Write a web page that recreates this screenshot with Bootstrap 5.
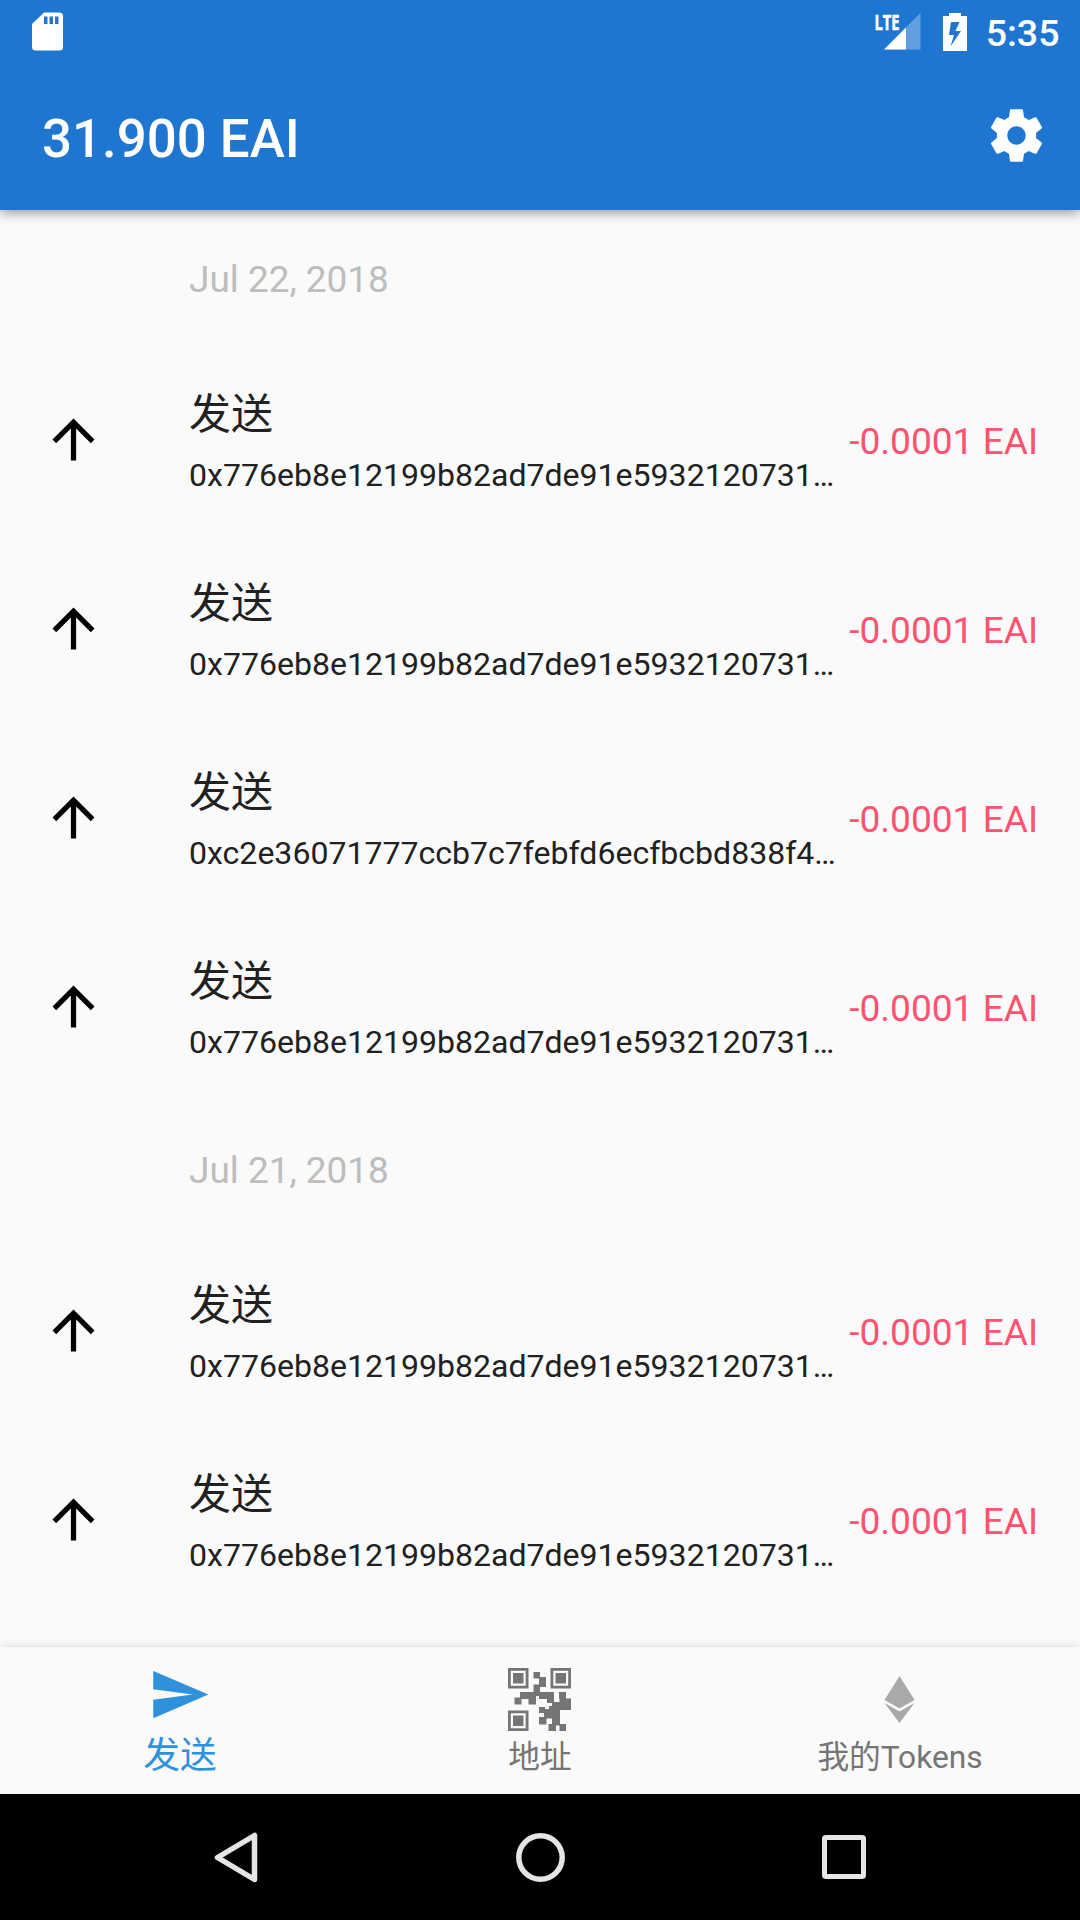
<!DOCTYPE html>
<html lang="zh-CN">
<head>
<meta charset="utf-8">
<meta name="viewport" content="width=device-width, initial-scale=1">
<title>EAI Wallet</title>
<link href="https://cdn.jsdelivr.net/npm/bootstrap@5.3.0/dist/css/bootstrap.min.css" rel="stylesheet">
<style>
body{font-family:Roboto,"Noto Sans CJK SC",sans-serif;background:#fafafa;color:#212121;width:1080px;height:1920px;overflow:hidden}
.top-area{background:#1f76d0;height:210px;box-shadow:0 2px 12px rgba(0,0,0,.45);z-index:2}
.status-bar{height:63px;padding:0 20.5px 0 32px}
.clock{font-size:37.5px;font-weight:500;line-height:63px;margin-left:18.5px;padding-top:3px}
.battery{margin-left:22px}
.lte{font:700 22px "Open Sans",Roboto,sans-serif;stroke:#fff;stroke-width:.6px}
.app-bar{height:147px;padding:0 32px 0 42px}
.app-title{font-size:52.8px;font-weight:500;line-height:62px;padding-top:5px}
.gear{margin-bottom:2px}
svg{display:block;flex:none}
.date-head{height:137px;padding:1px 0 0 189px;font-size:36.95px;line-height:137px;color:#bdbdbd}
.date-head.later{height:135px;line-height:133px}
.tx{height:189px;padding:0 42px}
.tx-arrow{width:147px;padding-bottom:5px}
.tx-title{font-size:42px;line-height:60px}
.tx-hash{font-size:32.06px;line-height:48px;padding-top:6px}
.tx-text{margin-right:-20px}
.tx-amount{font-size:37.1px;color:#ff5270}
.bottom-nav{height:147px;background:#fafafa;box-shadow:0 0 8px rgba(0,0,0,.15);color:#757575;z-index:2}
.tab-item{padding-top:16px}
.tab-item svg{margin-right:2px}
.tab-label{font-size:31.7px;line-height:44px;padding-top:10px}
.active-tab{color:#2d91dc}
.active-tab .tab-label{font-size:36.75px;padding-top:8px}
.tab-item svg.qr{margin:5px 1.500px -5px 0}
.tab-item svg.eth{margin-top:5px;margin-bottom:-5px}
.sys-nav{height:126px;background:#000;padding:0 205px}
</style>
</head>
<body class="d-flex flex-column">
<svg width="0" height="0" class="position-absolute"><symbol id="up" viewBox="0 0 24 24"><path d="M4 12l1.410 1.410L11 7.830V20h2V7.830l5.580 5.590L20 12l-8-8-8 8z"/></symbol></svg>
<header class="top-area position-relative flex-shrink-0 text-white">
  <div class="status-bar d-flex align-items-center justify-content-between">
    <svg width="31" height="39" viewBox="0 0 31 39" fill="#fff"><path fill-rule="evenodd" d="M12 .5h15.500a3.500 3.500 0 0 1 3.500 3.500v31a3.500 3.500 0 0 1-3.500 3.500h-24a3.500 3.500 0 0 1-3.500-3.500V12zM12 4.500v7.500h3.500V4.500zM17.500 4.500v7.500H21V4.500zM23 4.500v7.500h3.500V4.500z"/></svg>
    <div class="d-flex align-items-center">
      <svg width="46" height="37" viewBox="0 0 46 37" fill="#fff" overflow="visible"><path d="M45.500 0V36.500H9z" opacity=".3"/><path d="M31 14.500v22H9z"/><text class="lte" x="-.5" y="16.500" textLength="25" lengthAdjust="spacingAndGlyphs">LTE</text></svg>
      <svg class="battery" width="24" height="38" viewBox="0 0 24 38" fill="#fff"><path fill-rule="evenodd" d="M0 3h6V0h12v3h6v35H0zM8 9L6 22h5L7.500 33.500 18 18h-5.500L16.500 9z"/></svg>
      <span class="clock">5:35</span>
    </div>
  </div>
  <div class="app-bar d-flex align-items-center justify-content-between">
    <div class="app-title">31.900 EAI</div>
    <svg class="gear" width="63" height="63" viewBox="0 0 24 24" fill="#fff"><path d="M19.430 12.980c.04-.32.07-.64.07-.98s-.03-.66-.07-.98l2.110-1.650c.19-.15.24-.42.12-.64l-2-3.460c-.12-.22-.39-.3-.61-.22l-2.490 1c-.52-.4-1.080-.73-1.690-.98l-.38-2.650C14.460 2.180 14.250 2 14 2h-4c-.25 0-.46.18-.49.42l-.38 2.650c-.61.25-1.170.59-1.690.98l-2.490-1c-.23-.09-.49 0-.61.22l-2 3.460c-.13.22-.07.49.12.64l2.110 1.650c-.04.32-.07.65-.07.98s.03.66.07.98l-2.110 1.650c-.19.15-.24.42-.12.64l2 3.460c.12.22.39.3.61.22l2.490-1c.52.4 1.080.73 1.690.98l.38 2.650c.03.24.24.42.49.42h4c.25 0 .46-.18.49-.42l.38-2.650c.61-.25 1.170-.59 1.690-.98l2.490 1c.23.09.49 0 .61-.22l2-3.460c.12-.22.07-.49-.12-.64l-2.110-1.650zM12 15.500c-1.930 0-3.500-1.570-3.500-3.500s1.570-3.500 3.500-3.500 3.500 1.570 3.500 3.500-1.570 3.500-3.500 3.500z"/></svg>
  </div>
</header>
<main class="flex-grow-1 overflow-hidden">
  <div class="date-head">Jul 22, 2018</div>
  <div class="tx d-flex align-items-center"><div class="tx-arrow"><svg width="63" height="63"><use href="#up"/></svg></div><div class="tx-text flex-grow-1 text-nowrap"><div class="tx-title">发送</div><div class="tx-hash">0x776eb8e12199b82ad7de91e5932120731…</div></div><div class="tx-amount text-nowrap">-0.0001 EAI</div></div>
  <div class="tx d-flex align-items-center"><div class="tx-arrow"><svg width="63" height="63"><use href="#up"/></svg></div><div class="tx-text flex-grow-1 text-nowrap"><div class="tx-title">发送</div><div class="tx-hash">0x776eb8e12199b82ad7de91e5932120731…</div></div><div class="tx-amount text-nowrap">-0.0001 EAI</div></div>
  <div class="tx d-flex align-items-center"><div class="tx-arrow"><svg width="63" height="63"><use href="#up"/></svg></div><div class="tx-text flex-grow-1 text-nowrap"><div class="tx-title">发送</div><div class="tx-hash">0xc2e36071777ccb7c7febfd6ecfbcbd838f4…</div></div><div class="tx-amount text-nowrap">-0.0001 EAI</div></div>
  <div class="tx d-flex align-items-center"><div class="tx-arrow"><svg width="63" height="63"><use href="#up"/></svg></div><div class="tx-text flex-grow-1 text-nowrap"><div class="tx-title">发送</div><div class="tx-hash">0x776eb8e12199b82ad7de91e5932120731…</div></div><div class="tx-amount text-nowrap">-0.0001 EAI</div></div>
  <div class="date-head later">Jul 21, 2018</div>
  <div class="tx d-flex align-items-center"><div class="tx-arrow"><svg width="63" height="63"><use href="#up"/></svg></div><div class="tx-text flex-grow-1 text-nowrap"><div class="tx-title">发送</div><div class="tx-hash">0x776eb8e12199b82ad7de91e5932120731…</div></div><div class="tx-amount text-nowrap">-0.0001 EAI</div></div>
  <div class="tx d-flex align-items-center"><div class="tx-arrow"><svg width="63" height="63"><use href="#up"/></svg></div><div class="tx-text flex-grow-1 text-nowrap"><div class="tx-title">发送</div><div class="tx-hash">0x776eb8e12199b82ad7de91e5932120731…</div></div><div class="tx-amount text-nowrap">-0.0001 EAI</div></div>
</main>
<nav class="bottom-nav row g-0 position-relative flex-shrink-0 text-center">
  <div class="col-4 d-flex flex-column align-items-center tab-item active-tab"><svg width="63" height="63" viewBox="0 0 24 24" fill="currentColor"><path d="M2.010 21L23 12 2.010 3 2 10l15 2-15 2z"/></svg><div class="tab-label">发送</div></div>
  <div class="col-4 d-flex flex-column align-items-center tab-item"><svg class="qr" width="63" height="63" viewBox="0 0 63 63" fill="currentColor">
    <g fill="none" stroke="currentColor" stroke-width="2.800"><path d="M1.400 1.400h17.700v17.700H1.400zM43.900 1.400h17.700v17.700H43.900zM1.400 43.900h17.700v17.700H1.400z"/></g>
    <path d="M5 5h10.500v10.500H5zM47.500 5H58v10.500H47.500zM5 47.500h10.500V58H5z"/>
    <path d="M25.500 4H32v5h6v10h-6v5h14v10h5.500v-3.500h-.5V24h7v6.500h5V42H52v14h6v7h-6.500v-5.500h-3.500V63h-7.500v-7h3.500v-5.500h-5.500v6h-7.500V49h5v-4h-5v-6H37v2h4v-3h3v-3h-5v-4h-8v-3h-3v8.500h-7.500V31H13.500v5.500h-7v-7H12V24h13.500v-7.500H31v-6h-5.500z"/></svg><div class="tab-label">地址</div></div>
  <div class="col-4 d-flex flex-column align-items-center tab-item"><svg class="eth" width="63" height="63" viewBox="0 0 63 63" fill="#a9a9a9"><path d="M31.500 8L46.500 32 31.500 40.500 16.500 32zM16.500 35L31.500 43.500 46.500 35 31.500 55z"/></svg><div class="tab-label">我的Tokens</div></div>
</nav>
<footer class="sys-nav d-flex flex-shrink-0 align-items-center justify-content-between">
  <svg width="63" height="63" viewBox="0 0 63 63" fill="none" stroke="#e5e5e5" stroke-width="5.500" stroke-linejoin="round"><path d="M12.500 31.500L49.500 9.500v44z"/></svg>
  <svg width="63" height="63" viewBox="0 0 63 63" fill="none" stroke="#e5e5e5" stroke-width="5.500"><circle cx="31.500" cy="31.500" r="21.700"/></svg>
  <svg width="63" height="63" viewBox="0 0 63 63" fill="none" stroke="#e5e5e5" stroke-width="5"><rect x="12.500" y="11.500" width="39" height="39" rx="1.500"/></svg>
</footer>
<script src="https://cdn.jsdelivr.net/npm/bootstrap@5.3.0/dist/js/bootstrap.bundle.min.js"></script>
</body>
</html>
